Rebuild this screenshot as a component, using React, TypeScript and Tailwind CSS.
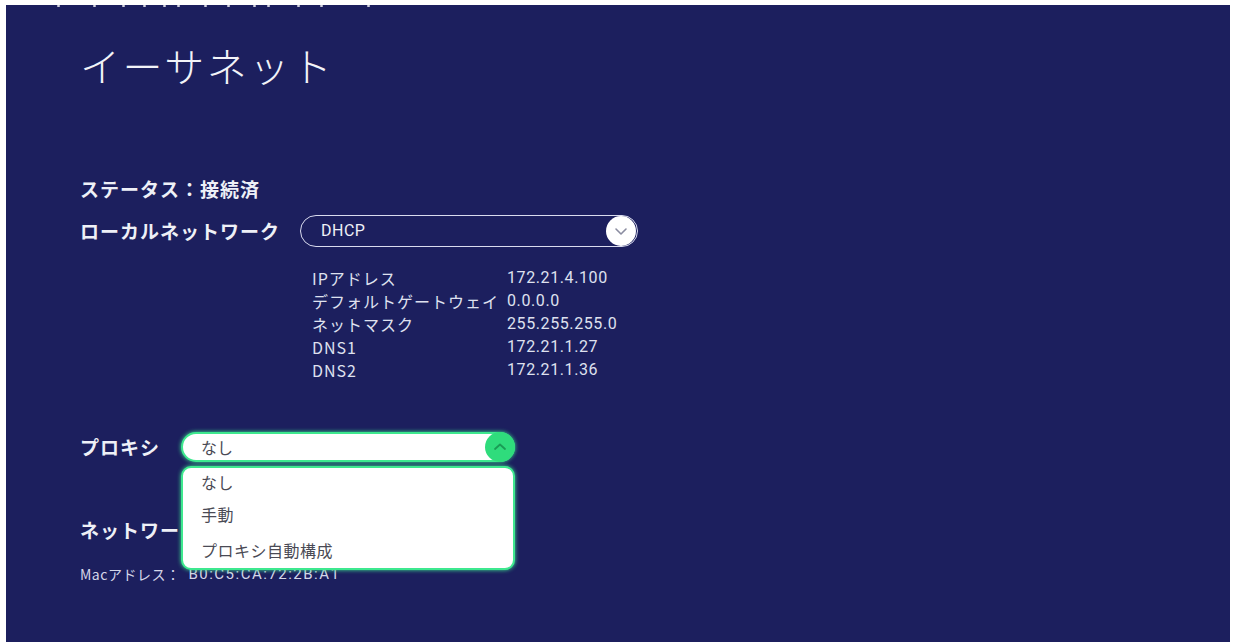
import React from "react";

const font = { fontFamily: '"Noto Sans CJK JP", "Noto Sans", Roboto, sans-serif' };
const roboto = { fontFamily: 'Roboto, "Noto Sans CJK JP", sans-serif' };

function ChevronDown({ color }: { color: string }) {
  return (
    <svg width="16" height="16" viewBox="0 0 16 16" fill="none">
      <path d="M3 6 L8 11 L13 6" stroke={color} strokeWidth="1.6" strokeLinecap="round" strokeLinejoin="round" />
    </svg>
  );
}
function ChevronUp({ color }: { color: string }) {
  return (
    <svg width="16" height="16" viewBox="0 0 16 16" fill="none">
      <path d="M3 10 L8 5.5 L13 10" stroke={color} strokeWidth="1.8" strokeLinecap="round" strokeLinejoin="round" />
    </svg>
  );
}

const rows: [string, string][] = [
  ["IPアドレス", "172.21.4.100"],
  ["デフォルトゲートウェイ", "0.0.0.0"],
  ["ネットマスク", "255.255.255.0"],
  ["DNS1", "172.21.1.27"],
  ["DNS2", "172.21.1.36"],
];

const dots = [51, 87, 116, 137, 157, 171, 198, 221, 247, 261, 291, 314, 361];

export default function App() {
  return (
    <div className="w-[1234px] h-[642px] bg-white overflow-hidden" style={font}>
      <div className="ml-[6px] mr-[4px] mt-[5px] h-[637px] bg-[#1c1f5e] relative">
        {dots.map((x) => (
          <div key={x} className="absolute top-0 w-[3px] h-[2px] bg-white/80 rounded-full" style={{ left: x }} />
        ))}
        <div className="pl-[74px] pt-[36px] flex flex-col">
          <div className="text-[40px] leading-[48px] font-light text-[#f2f3f8] tracking-[2.5px]">イーサネット</div>

          <div className="mt-[88px] h-[24px] flex items-center text-[19px] tracking-[1px] font-bold text-[#eef0f7]">
            ステータス：接続済
          </div>

          <div className="mt-[13px] h-[34px] flex items-center">
            <div className="w-[220px] text-[19px] tracking-[1px] font-bold text-[#eef0f7]">ローカルネットワーク</div>
            <div className="w-[338px] h-[32px] rounded-full border-[1.5px] border-[#d9dbee] flex items-center justify-between pl-[20px] pr-[1px]">
              <span className="text-[16px] tracking-[0.5px] text-[#eef0f7]" style={roboto}>DHCP</span>
              <div className="w-[30px] h-[30px] rounded-full bg-white flex items-center justify-center">
                <ChevronDown color="#8a8ca0" />
              </div>
            </div>
          </div>

          <div className="mt-[18px] ml-[232px] flex flex-col text-[16px] tracking-[1px] text-[#dfe1ef]">
            {rows.map(([k, v]) => (
              <div key={k} className="h-[23px] flex items-center">
                <div className="w-[195px]">{k}</div>
                <div className="text-[16px] tracking-[0.6px]" style={roboto}>{v}</div>
              </div>
            ))}
          </div>

          <div className="mt-[51px] h-[30px] flex items-center">
            <div className="w-[101px] text-[19px] tracking-[1px] font-bold text-[#eef0f7]">プロキシ</div>
            <div className="relative w-[334px]">
              <div className="h-[30px] rounded-full bg-white border-[2px] border-[#3ee88f] shadow-[0_0_4px_#3ee88f] flex items-center justify-between pl-[18px]">
                <span className="text-[16px] text-[#4a4a55]">なし</span>
                <div className="w-[30px] h-[30px] -mr-[2px] rounded-full bg-[#2fdc7c] flex items-center justify-center">
                  <ChevronUp color="#1a9c55" />
                </div>
              </div>
              <div className="absolute left-0 top-[34px] w-[334px] h-[104px] rounded-[10px] bg-white border-[2px] border-[#3ee88f] shadow-[0_0_4px_#3ee88f] z-10 flex flex-col pl-[18px] text-[16px] tracking-[0.5px] text-[#4a4a55]">
                <div className="h-[28px] flex items-center">なし</div>
                <div className="h-[36px] flex items-center">手動</div>
                <div className="h-[36px] flex items-center">プロキシ自動構成</div>
              </div>
            </div>
          </div>

          <div className="mt-[53px] h-[30px] flex items-center text-[19px] tracking-[1px] font-bold text-[#eef0f7]">ネットワーク情報</div>

          <div className="mt-[19px] h-[20px] flex items-center text-[14px] text-[#d4d6e8]">
            <span className="tracking-[0.5px]">Macアドレス：</span>
            <span className="ml-[8px] text-[15px] tracking-[1.5px]" style={roboto}>B0:C5:CA:72:2B:A1</span>
          </div>
        </div>
      </div>
    </div>
  );
}
